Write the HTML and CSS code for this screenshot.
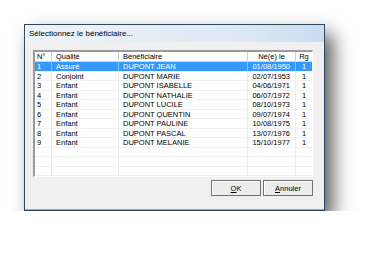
FILE: index.html
```html
<!DOCTYPE html>
<html lang="fr">
<head>
  <meta charset="UTF-8">
  <title>Sélectionnez le bénéficiaire</title>
  <link rel="stylesheet" href="styles.css">
</head>
<body>
  <div class="window">
    <div class="titlebar">Sélectionnez le bénéficiaire...</div>

    <div class="content">
      <div class="list">
        <div class="row head">
          <span class="c-num">N°</span>
          <span class="c-qual">Qualité</span>
          <span class="c-name">Bénéficiaire</span>
          <span class="c-date">Né(e) le</span>
          <span class="c-rg">Rg</span>
        </div>
        <div class="row selected">
          <span class="c-num">1</span><span class="c-qual">Assuré</span><span class="c-name">DUPONT JEAN</span><span class="c-date">01/08/1950</span><span class="c-rg">1</span>
        </div>
        <div class="row">
          <span class="c-num">2</span><span class="c-qual">Conjoint</span><span class="c-name">DUPONT MARIE</span><span class="c-date">02/07/1953</span><span class="c-rg">1</span>
        </div>
        <div class="row">
          <span class="c-num">3</span><span class="c-qual">Enfant</span><span class="c-name">DUPONT ISABELLE</span><span class="c-date">04/06/1971</span><span class="c-rg">1</span>
        </div>
        <div class="row">
          <span class="c-num">4</span><span class="c-qual">Enfant</span><span class="c-name">DUPONT NATHALIE</span><span class="c-date">06/07/1972</span><span class="c-rg">1</span>
        </div>
        <div class="row">
          <span class="c-num">5</span><span class="c-qual">Enfant</span><span class="c-name">DUPONT LUCILE</span><span class="c-date">08/10/1973</span><span class="c-rg">1</span>
        </div>
        <div class="row">
          <span class="c-num">6</span><span class="c-qual">Enfant</span><span class="c-name">DUPONT QUENTIN</span><span class="c-date">09/07/1974</span><span class="c-rg">1</span>
        </div>
        <div class="row">
          <span class="c-num">7</span><span class="c-qual">Enfant</span><span class="c-name">DUPONT PAULINE</span><span class="c-date">10/08/1975</span><span class="c-rg">1</span>
        </div>
        <div class="row">
          <span class="c-num">8</span><span class="c-qual">Enfant</span><span class="c-name">DUPONT PASCAL</span><span class="c-date">13/07/1976</span><span class="c-rg">1</span>
        </div>
        <div class="row">
          <span class="c-num">9</span><span class="c-qual">Enfant</span><span class="c-name">DUPONT MELANIE</span><span class="c-date">15/10/1977</span><span class="c-rg">1</span>
        </div>
        <div class="row"><span class="c-num"></span><span class="c-qual"></span><span class="c-name"></span><span class="c-date"></span><span class="c-rg"></span></div>
        <div class="row"><span class="c-num"></span><span class="c-qual"></span><span class="c-name"></span><span class="c-date"></span><span class="c-rg"></span></div>
        <div class="row"><span class="c-num"></span><span class="c-qual"></span><span class="c-name"></span><span class="c-date"></span><span class="c-rg"></span></div>
      </div>

      <div class="buttons">
        <button class="btn"><u>O</u>K</button>
        <button class="btn"><u>A</u>nnuler</button>
      </div>
    </div>
  </div>
</body>
</html>
```

FILE: styles.css
```css
body {
  margin: 0;
  padding: 24px 0 0 24px;
  background: #fff;
  font-family: "Liberation Sans", Arial, sans-serif;
}

.window {
  width: 299px;
  height: 185px;
  border: 1px solid #2d4b60;
  background: #f0f0f0;
  box-shadow: inset 0 -1px 0 #7fb0d0, 8px 10px 18px rgba(0, 0, 0, 0.65);
  display: flex;
  flex-direction: column;
}

.titlebar {
  height: 17px;
  line-height: 17px;
  padding-left: 4px;
  font-size: 8px;
  color: #000;
  background: linear-gradient(to right, #eef3f8, #dfe9f4 70%, #c9dcee);
}

.content {
  padding: 8px 0 0 8px;
}

/* list view */
.list {
  width: 277px;
  background: #fff;
  border-top: 2px solid #9a9a9a;
  border-left: 2px solid #9a9a9a;
  border-right: 1px solid #fff;
  border-bottom: 1px solid #fff;
}

.row {
  display: flex;
  height: 9.5px;
  line-height: 9.5px;
  font-size: 7.5px;
  color: #000;
  border-bottom: 0.5px solid #f0f0f0;
  box-sizing: border-box;
}

.row span {
  display: block;
  white-space: nowrap;
  overflow: hidden;
  box-sizing: border-box;
  border-left: 1px solid #ececec;
}

.row span:first-child {
  border-left: none;
}

.c-num { width: 16px; padding-left: 2px; }
.c-qual { width: 67px; padding-left: 4px; }
.c-name { width: 129px; padding-left: 4px; }
.c-date { width: 48px; padding-right: 5px; text-align: right; }
.c-rg { width: 17px; text-align: center; }

.row.head {
  height: 10px;
  line-height: 10px;
  border-bottom: 1px solid #d5d5d5;
}

.row.head span {
  border-left: 1px solid #d0d0d0;
}

.row.head span:first-child {
  border-left: none;
}

.row.head .c-date {
  text-align: center;
  padding-right: 0;
}

.row.selected {
  background: #3399ff;
  color: #fff;
}

.row.selected span {
  border-left-color: #8cc4ff;
}

/* buttons */
.buttons {
  width: 280px;
  display: flex;
  justify-content: flex-end;
  gap: 2px;
  margin-top: 3px;
}

.btn {
  width: 50px;
  height: 16px;
  padding: 0;
  font-family: "Liberation Sans", Arial, sans-serif;
  font-size: 7.5px;
  color: #000;
  background: #ececec;
  border: 1px solid #707070;
  box-shadow: inset 1px 1px 0 #fff;
}
```
